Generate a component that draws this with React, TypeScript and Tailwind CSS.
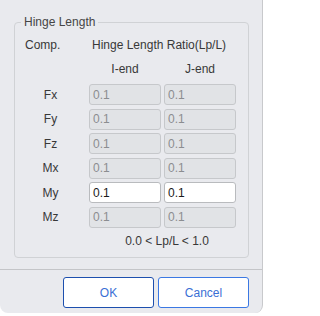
import React from "react";

const rows = [
  { k: "Fx", on: false },
  { k: "Fy", on: false },
  { k: "Fz", on: false },
  { k: "Mx", on: false },
  { k: "My", on: true },
  { k: "Mz", on: false },
];

function Box({ on }: { on: boolean }) {
  return (
    <div
      className={
        "h-[21px] rounded-[3px] border flex items-center pl-[3px] text-[12px] " +
        (on
          ? "bg-white border-[#b9bbbe] text-[#1a1a1a]"
          : "bg-[#e1e3e6] border-[#c6c8cb] text-[#8b8d90]")
      }
    >
      0.1
    </div>
  );
}

export default function App() {
  return (
    <div
      className="w-[265px] h-[316px] bg-white overflow-hidden"
      style={{ fontFamily: "'Liberation Sans', Arial, sans-serif" }}
    >
      <div className="w-[263px] h-[313px] bg-[#e9eaee] rounded-b-[8px] border-r border-[#c8c9cc] flex flex-col text-[#383838]">
        <fieldset className="mt-[14px] ml-[14px] w-[235px] h-[244px] border border-[#d0d2d5] rounded-[4px]">
          <legend className="ml-[6px] px-[3px] text-[12px] leading-[16px] text-[#454545]">
            Hinge Length
          </legend>
          <div className="grid grid-cols-[71px_72px_72px] gap-x-[3px] text-[12px]">
            <div className="h-[16px] mt-[7px] leading-[16px] pl-[10px]">Comp.</div>
            <div className="col-span-2 h-[16px] mt-[7px] leading-[16px] pl-[3px] whitespace-nowrap">
              Hinge Length Ratio(Lp/L)
            </div>
            <div className="h-[16px] mt-[8px]" />
            <div className="h-[16px] mt-[8px] leading-[16px] text-center">I-end</div>
            <div className="h-[16px] mt-[8px] leading-[16px] text-center">J-end</div>
          </div>
          <div className="grid grid-cols-[71px_72px_72px] gap-x-[3px] gap-y-[3.6px] mt-[7px] text-[12px]">
            {rows.map((r) => (
              <React.Fragment key={r.k}>
                <div className="h-[21px] flex items-center justify-center">
                  {r.k}
                </div>
                <Box on={r.on} />
                <Box on={r.on} />
              </React.Fragment>
            ))}
          </div>
          <div className="mt-[5px] pl-[71px] text-center text-[12px] leading-[16px]">
            0.0 &lt; Lp/L &lt; 1.0
          </div>
        </fieldset>
        <div className="mt-[11px] h-px bg-[#c4c5c8]" />
        <div className="mt-[7px] flex justify-end gap-[4px] pr-[13px]">
          <button className="w-[91px] h-[31px] bg-white rounded-[3px] border border-[#1d4fae] text-[#3a6fd5] text-[12px]">
            OK
          </button>
          <button className="w-[91px] h-[31px] bg-white rounded-[3px] border border-[#3b78e3] text-[#3a6fd5] text-[12px]">
            Cancel
          </button>
        </div>
      </div>
    </div>
  );
}
